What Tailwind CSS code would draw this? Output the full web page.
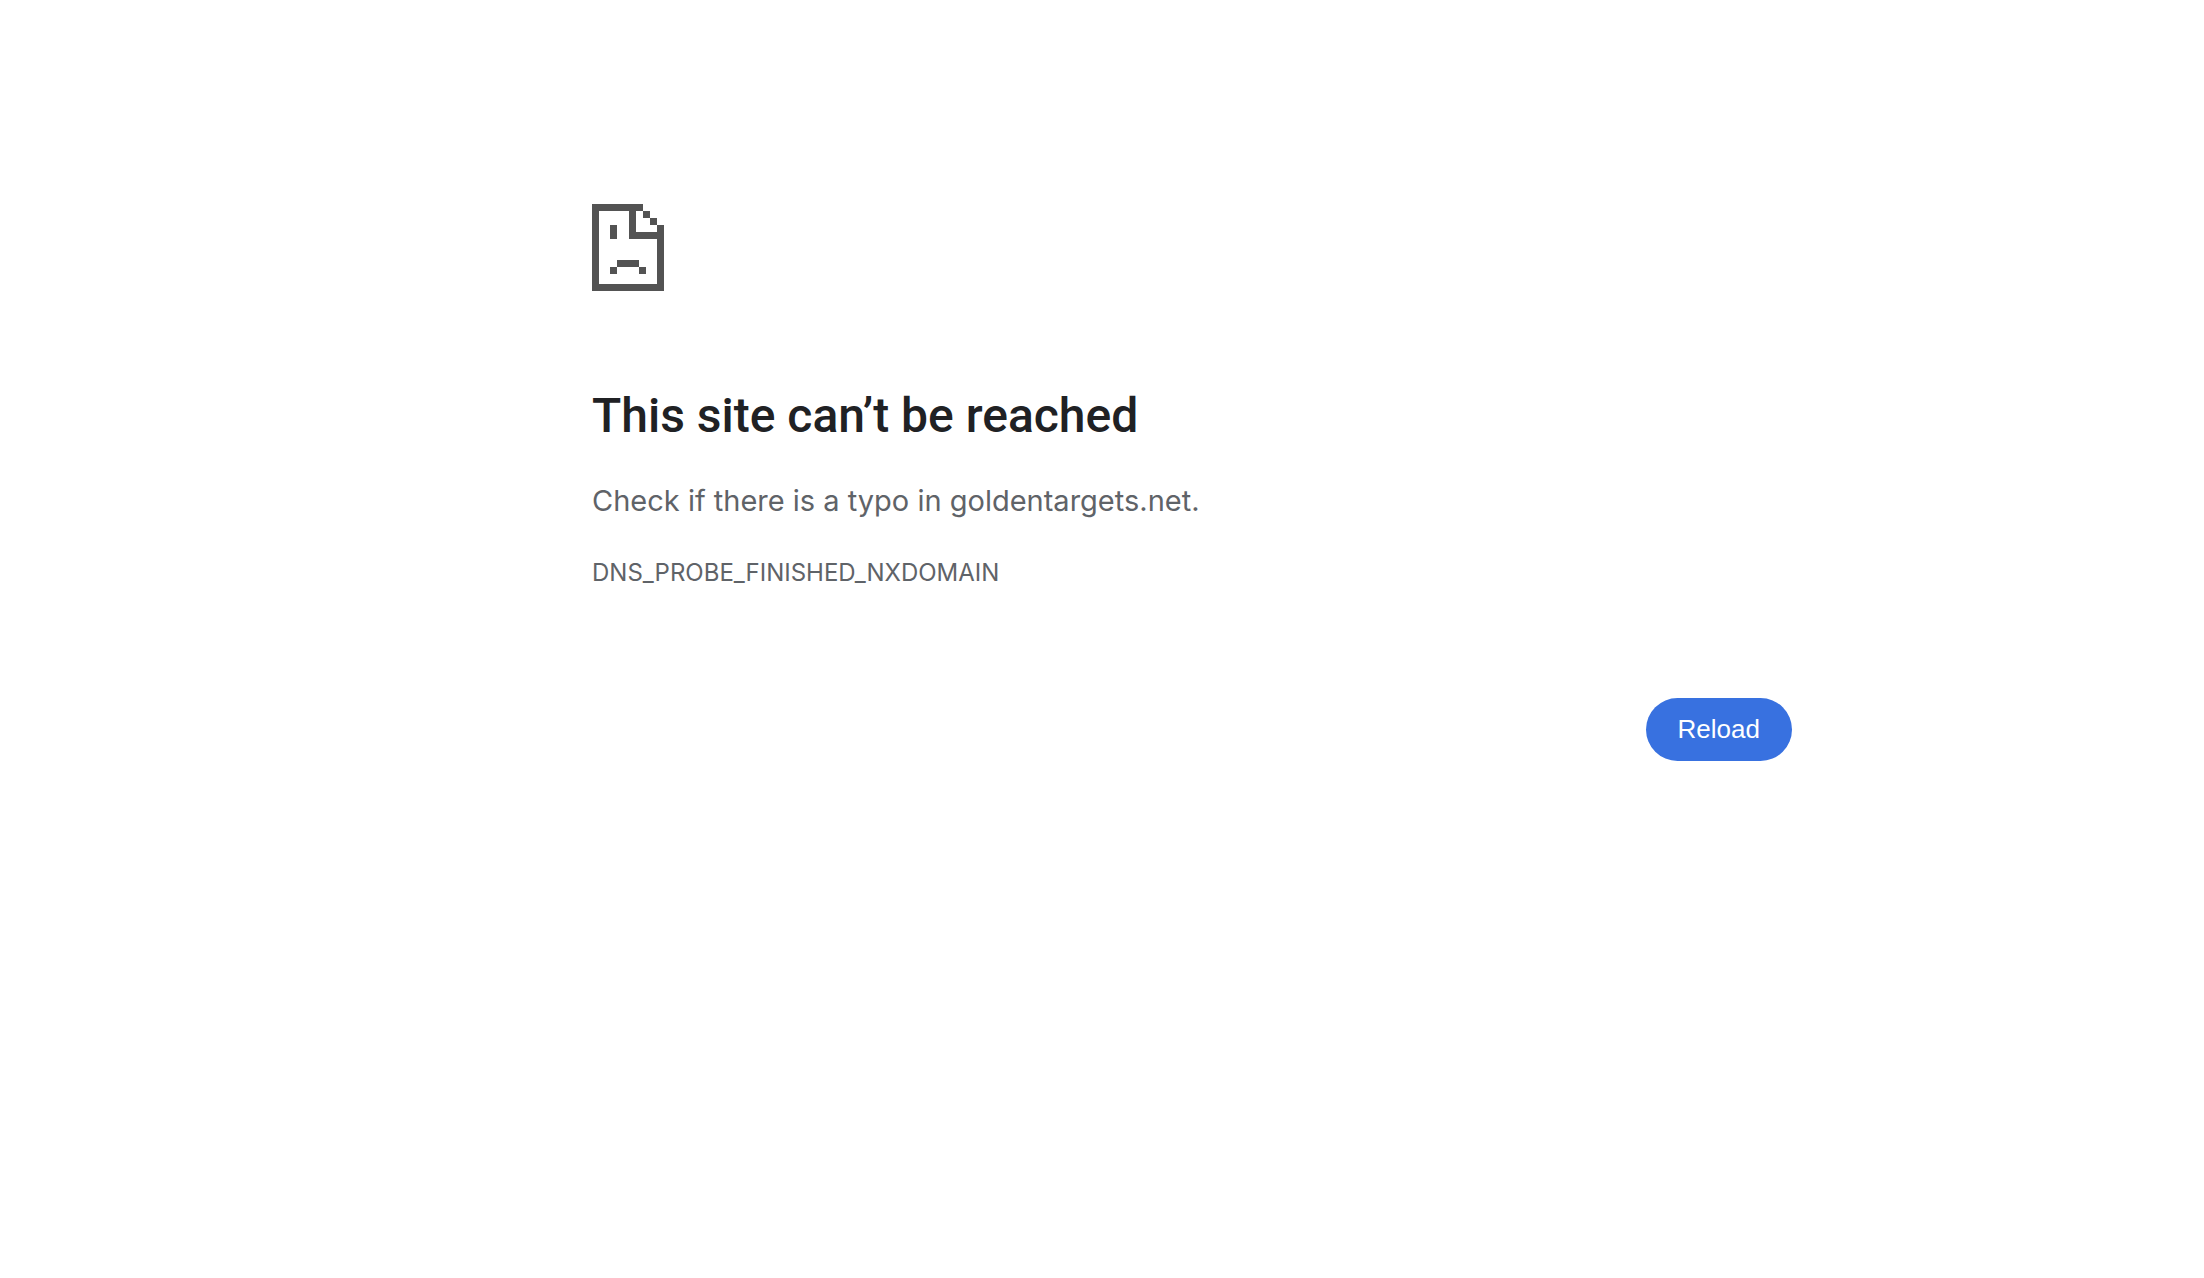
<!DOCTYPE html>
<html lang="en">
<head>
<meta charset="utf-8">
<meta name="viewport" content="width=device-width, initial-scale=1">
<title>goldentargets.net</title>
<script src="https://cdn.jsdelivr.net/npm/@tailwindcss/browser@4"></script>
</head>
<body class="min-h-screen bg-white pl-[180px] font-['Inter',sans-serif] text-[#5f6368]">
<main class="mx-auto max-w-[1200px] pt-[204px]">
  <svg class="block h-[87px] w-[72px]" viewBox="0 0 72 87" fill="#535353" shape-rendering="crispEdges" role="img" aria-label="Sad page">
    <path d="M0 0H51V7H44V28H65V21H72V87H0ZM7 7V80H65V35H37V7Z" fill-rule="evenodd"/>
    <path d="M51 7h7v7h-7zM58 14h7v7h-7zM18 21h7v14h-7zM25 56h22v7H25zM18 63h7v7h-7zM47 63h7v7h-7z"/>
  </svg>
  <h1 class="mt-24 font-['Roboto',sans-serif] text-[48px] leading-[58px] font-medium text-[#202124]">This site can’t be reached</h1>
  <p class="mt-8 text-[29px] leading-[48px]">Check if there is a typo in goldentargets.net.</p>
  <p class="mt-8 text-2xl leading-[32px]">DNS_PROBE_FINISHED_NXDOMAIN</p>
  <div class="mt-[109px] flex justify-end">
    <button type="button" class="h-[63px] rounded-full bg-[#3871e0] px-8 font-['Liberation_Sans',sans-serif] text-[26px] text-white">Reload</button>
  </div>
</main>
</body>
</html>
